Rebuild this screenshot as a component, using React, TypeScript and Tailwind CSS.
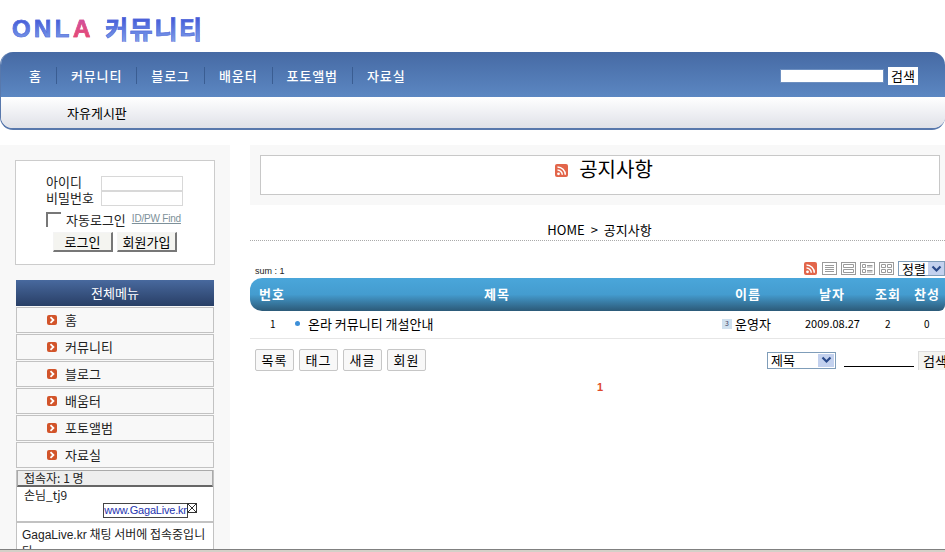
import type { ReactNode } from "react";
const LIB = { fontFamily: '"Liberation Sans", sans-serif' };
function Rss({ size = 13 }: { size?: number }) {
  return (
    <svg width={size} height={size} viewBox="0 0 13 13" className="shrink-0">
      <rect width="13" height="13" rx="2" fill="#e2654a" />
      <circle cx="3.5" cy="9.8" r="1.4" fill="#fff" />
      <path d="M2.5 6a4.8 4.8 0 0 1 4.8 4.8" stroke="#fff" strokeWidth="1.5" fill="none" />
      <path d="M2.5 3a7.8 7.8 0 0 1 7.8 7.8" stroke="#fff" strokeWidth="1.5" fill="none" />
    </svg>
  );
}
function Arrow() {
  return (
    <svg width="10" height="10" viewBox="0 0 10 10" className="shrink-0">
      <rect width="10" height="10" rx="2" fill="#d2542a" />
      <path d="M3.5 2.2 6.4 5 3.5 7.8" stroke="#fff" strokeWidth="1.8" fill="none" />
    </svg>
  );
}
function ViewIcon({ kind }: { kind: number }) {
  const c = "#9a9a9a";
  return (
    <svg width="15" height="13" viewBox="0 0 15 13" className="shrink-0">
      <rect x="0.5" y="0.5" width="14" height="12" fill="#fff" stroke={c} />
      {kind === 0 && <path d="M3 3.5h9M3 5.5h9M3 7.5h9M3 9.5h9" stroke={c} />}
      {kind === 1 && <path d="M2.5 2.5h10v3h-10zM2.5 7.5h10v3h-10z" stroke={c} fill="none" />}
      {kind === 2 && <path d="M2.5 2.5h3v3h-3zM2.5 7.5h3v3h-3zM7 3.5h5.5M7 5h5.5M7 8.5h5.5M7 10h5.5" stroke={c} fill="none" />}
      {kind === 3 && <path d="M2.5 2.5h4v3h-4zM8.5 2.5h4v3h-4zM2.5 7.5h4v3h-4zM8.5 7.5h4v3h-4z" stroke={c} fill="none" />}
    </svg>
  );
}
function Chevron() {
  return (
    <span className="flex h-[13px] w-[16px] shrink-0 items-center justify-center bg-[#c3d1ee]">
      <svg width="11" height="8" viewBox="0 0 11 8"><path d="M1.5 1.5 5.5 5.5 9.5 1.5" stroke="#2a4a8a" strokeWidth="2.2" fill="none" /></svg>
    </span>
  );
}
function Bevel({ children, cls }: { children: ReactNode; cls: string }) {
  return (
    <div className={"flex items-center justify-center border-t border-l border-t-[#f4f4f4] border-l-[#f4f4f4] border-r-2 border-b-2 border-r-[#777] border-b-[#777] bg-[#f4f4f0] pb-px text-[13px] text-black " + cls}>
      {children}
    </div>
  );
}
const nav = ["홈", "커뮤니티", "블로그", "배움터", "포토앨범", "자료실"];
const heads: [string, string][] = [["번호", "w-[225px]"], ["제목", "w-[251px]"], ["이름", "w-[84px]"], ["날자", "w-[56px]"], ["조회", "w-[39px]"], ["찬성", "w-[30px]"]];
export default function App() {
  return (
    <div className="relative flex h-[552px] w-[945px] flex-col overflow-hidden bg-white text-[13px] leading-none text-[#222]" style={{ fontFamily: '"Noto Sans CJK KR", "Liberation Sans", sans-serif' }}>
      <div className="flex h-[52px] shrink-0 items-center pl-[12px] pt-[5px]">
        <span className="bg-gradient-to-b from-[#3f50d6] to-[#7f9fe8] bg-clip-text text-[24px] font-bold tracking-[3.4px] text-transparent [-webkit-text-stroke:0.6px_#5a70dc]" style={LIB}>ONL</span>
        <span className="bg-gradient-to-b from-[#c850a8] to-[#f04460] bg-clip-text text-[24px] font-bold text-transparent [-webkit-text-stroke:0.6px_#e0508c]" style={LIB}>A</span>
        <span className="ml-[15px] bg-gradient-to-b from-[#3f50d6] to-[#7f9fe8] bg-clip-text text-[25px] font-bold tracking-[1.6px] text-transparent [-webkit-text-stroke:0.6px_#5a70dc]">커뮤니티</span>
      </div>
      <div className="h-[78px] shrink-0 overflow-hidden rounded-[13px] border-b-[2px] border-l border-[#5878ac]">
        <div className="flex h-[45px] items-center justify-between bg-gradient-to-b from-[#466aa4] to-[#5c87c2] pl-[28px] pr-[27px] pt-[2px]">
          <div className="flex items-center font-medium tracking-[0.9px] text-white">
            {nav.map((n, i) => (
              <div key={n} className="flex items-center">
                {i > 0 && <span className="mx-[14px] h-[17px] w-px bg-[#3a5d92]" />}
                <span>{n}</span>
              </div>
            ))}
          </div>
          <div className="flex items-center gap-[4px]">
            <div className="h-[14px] w-[104px] border border-[#6d8fc0] bg-white" />
            <div className="flex h-[18px] w-[30px] items-center justify-center bg-white text-[13px] text-black">검색</div>
          </div>
        </div>
        <div className="flex h-[31px] items-center bg-gradient-to-b from-white to-[#dfe1e8] pl-[66px] text-black">자유게시판</div>
      </div>
      <div className="mt-[15px] flex min-h-0 flex-1 gap-[20px]">
        <aside className="flex w-[230px] shrink-0 flex-col overflow-hidden bg-[#f8f8f8] pl-[15px] pr-[15px] pt-[15px]">
          <div className="flex h-[105px] shrink-0 flex-col border border-[#cccccc] bg-white pl-[30px] pt-[15px]">
            <div className="flex h-[15px] items-center">
              <span className="w-[55px] pb-[4px]">아이디</span>
              <span className="h-[15px] w-[82px] border border-[#d8d8d8]" />
            </div>
            <div className="flex h-[15px] items-center">
              <span className="w-[55px] pb-[2px]">비밀번호</span>
              <span className="h-[15px] w-[82px] border border-[#d8d8d8]" />
            </div>
            <div className="mt-[5px] flex h-[16px] items-center">
              <span className="h-[15px] w-[15px] border-t-2 border-l-2 border-[#777] bg-white" />
              <span className="ml-[5px]">자동로그인</span>
              <span className="ml-[6px] text-[10px] tracking-[-0.2px] text-[#7d9099] underline" style={LIB}>ID/PW Find</span>
            </div>
            <div className="ml-[7px] mt-[5px] flex gap-[4px]">
              <Bevel cls="h-[20px] w-[60px]">로그인</Bevel>
              <Bevel cls="h-[20px] w-[60px]">회원가입</Bevel>
            </div>
          </div>
          <div className="mx-px mt-[15px] flex h-[26px] shrink-0 items-center justify-center bg-gradient-to-b from-[#48699e] to-[#293f66] pb-[2px] text-white">전체메뉴</div>
          <div className="mx-px flex shrink-0 flex-col">
            {nav.map((s) => (
              <div key={s} className="mt-[1px] flex h-[26px] items-center border border-[#c2c2c2] bg-[#f8f8f8] pl-[30px]">
                <Arrow />
                <span className="ml-[8px] pb-[2px]">{s}</span>
              </div>
            ))}
          </div>
          <div className="relative mx-px mt-[2px] h-[51px] shrink-0 border-x border-[#c2c2c2] bg-white">
            <div className="flex h-[17px] items-center border border-b-2 border-[#aaa] border-b-[#666] bg-[#eeeeee] pl-[6px] text-[12px]">접속자: 1 명</div>
            <div className="pl-[7px] pt-[2px] text-[12px]">손님_tj9</div>
            <div className="absolute left-[86px] top-[33px] flex h-[15px] w-[85px] items-center justify-center border border-[#444] text-[11px] tracking-[-0.2px] text-[#2433b0]" style={LIB}>www.GagaLive.kr</div>
            <svg className="absolute left-[170px] top-[33px]" width="10" height="10" viewBox="0 0 10 10"><rect x="0.5" y="0.5" width="9" height="9" fill="#fff" stroke="#333" /><path d="M1 1l8 8M9 1l-8 8" stroke="#333" /></svg>
          </div>
          <div className="mx-px border-x border-t-2 border-[#c2c2c2] bg-white pl-[5px] pr-[5px] pt-[3px] text-[12px] leading-[15px]">
            <span style={LIB}>GagaLive.kr</span> 채팅 서버에 접속중입니다
          </div>
        </aside>
        <main className="flex w-[695px] shrink-0 flex-col">
          <div className="h-[60px] shrink-0 bg-[#f8f8f8] pl-[10px] pr-[5px] pt-[10px]">
            <div className="flex h-[40px] items-center justify-center gap-[11px] border border-[#c8c8c8] bg-white pb-[9px] pl-[8px] text-[20px] text-black">
              <Rss />
              <span className="pb-[4px]">공지사항</span>
            </div>
          </div>
          <div className="flex h-[36px] shrink-0 items-end justify-center border-b border-dotted border-[#aaa] pb-[4px] pl-[4px] text-black">
            <span className="mr-[6px]">HOME</span>
            <span className="mr-[6px]">&gt;</span>
            <span>공지사항</span>
          </div>
          <div className="mt-[20px] flex h-[17px] shrink-0 items-end justify-between pb-[2px]">
            <span className="pl-[5px] text-[9px]" style={LIB}>sum : 1</span>
            <div className="flex items-center gap-[4px]">
              <span className="mr-px flex"><Rss /></span>
              <ViewIcon kind={0} />
              <ViewIcon kind={1} />
              <ViewIcon kind={2} />
              <ViewIcon kind={3} />
              <div className="flex h-[15px] w-[47px] items-center justify-between border border-[#7f9db9] pl-[3px] text-black">
                정렬
                <Chevron />
              </div>
            </div>
          </div>
          <div className="flex h-[33px] shrink-0 items-center rounded-bl-[12px] rounded-br-[6px] rounded-tl-[12px] bg-gradient-to-b from-[#4aa6da] via-[#449ccf] to-[#2c5a78] pb-[3px] pl-[9px] font-bold tracking-[1px] text-white">
            {heads.map(([h, w]) => (
              <span key={h} className={"shrink-0 " + w}>{h}</span>
            ))}
          </div>
          <div className="flex h-[28px] shrink-0 items-center border-b border-[#e6e6e6] pb-[2px] text-black">
            <span className="w-[45px] pl-[20px] text-[10px]">1</span>
            <span className="mr-[8px] h-[5px] w-[5px] rounded-full bg-[#3d8fd8]" />
            <span className="w-[414px]">온라 커뮤니티 개설안내</span>
            <span className="flex h-[10px] w-[10px] items-center justify-center bg-[#cfe0ee] text-[7px] text-[#446]">3</span>
            <span className="ml-[3px] w-[70px]">운영자</span>
            <span className="w-[80px] text-[11px]">2009.08.27</span>
            <span className="w-[39px] text-[10px]">2</span>
            <span className="text-[10px]">0</span>
          </div>
          <div className="mt-[10px] flex items-center justify-between pl-[5px]">
            <div className="flex gap-[5px]">
              {["목록", "태그", "새글", "회원"].map((b) => (
                <span key={b} className="flex h-[22px] w-[39px] items-center justify-center rounded-[2px] border border-[#c6c6c6] bg-[#f8f8f8] pb-px tracking-[1px] text-black">{b}</span>
              ))}
            </div>
            <div className="flex items-center">
              <div className="flex h-[17px] w-[69px] items-center justify-between border border-[#7f9db9] pl-[3px] pr-px text-black">
                <span className="pb-px">제목</span>
                <Chevron />
              </div>
              <span className="ml-[8px] mt-[13px] h-px w-[70px] bg-black" />
              <span className="ml-[4px] flex h-[19px] w-[27px] items-center justify-start overflow-hidden whitespace-nowrap border-t border-l border-[#ddd] bg-[#f4f4f0] pl-[4px] pb-px text-black">검색</span>
            </div>
          </div>
          <div className="mt-[11px] pl-[347px] text-[11px] font-bold text-[#e04a2a]" style={LIB}>1</div>
        </main>
      </div>
      <div className="h-[3px] shrink-0 border-t border-[#808080] bg-[#d4d0c8]" />
    </div>
  );
}
